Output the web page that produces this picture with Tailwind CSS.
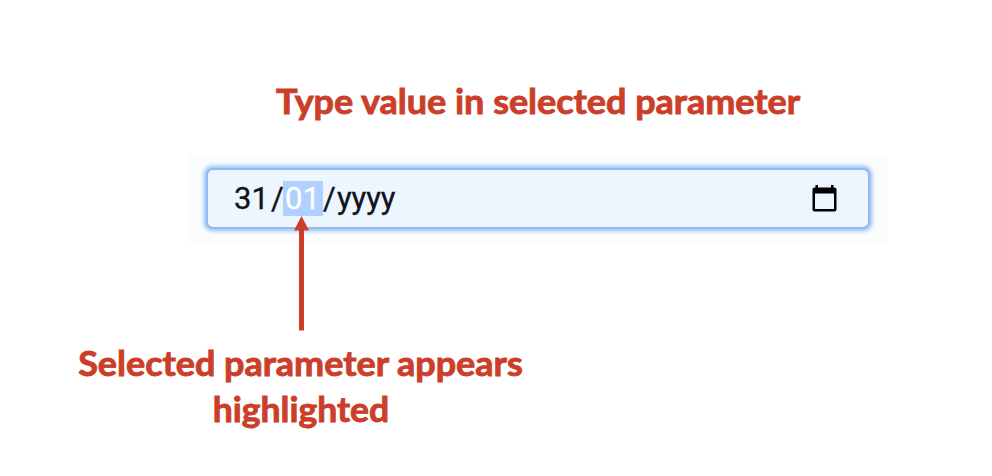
<!DOCTYPE html>
<html lang="en">
<head>
<meta charset="utf-8">
<title>Date field</title>
<script src="https://cdn.jsdelivr.net/npm/@tailwindcss/browser@4"></script>
</head>
<body class="relative h-[476px] w-[992px] overflow-hidden bg-white font-['Lato',sans-serif] text-[#cb3f2a]">
<main class="flex flex-col items-start">
  <h1 class="mt-[77px] ml-[276px] flex h-[46px] w-[525px] items-center justify-center text-[35px] leading-[46px] font-bold whitespace-nowrap [-webkit-text-stroke:0.9px_#cb3f2a]"><span class="scale-x-[1.027]">Type value in selected parameter</span></h1>
  <section class="mt-[31px] ml-[189px] h-[90px] w-[699px] bg-[#fbfdfd] px-[17px] pt-[14px]">
    <div class="flex h-[61px] w-[664px] items-center rounded-[7px] border-[2px] border-[#91bbf0] bg-[#edf5ff] pr-[31px] pl-[26px] font-['Roboto',sans-serif] text-[31px] leading-[35px] text-[#101418] shadow-[0_0_4px_1.5px_#91bcf3] [-webkit-text-stroke:0.3px]">
      <span class="w-[37px] tracking-[0.2px]">31</span>
      <span class="w-[12px]">/</span>
      <span class="h-[35px] w-[40px] bg-[#b0d0ff] pl-[2px] tracking-[0.4px] text-white">01</span>
      <span class="w-[14px]">/</span>
      <span class="tracking-[-0.1px]">yyyy</span>
      <svg class="ml-auto h-[27px] w-[25px]" viewBox="0 0 25 27" aria-hidden="true"><path fill="#000" fill-rule="evenodd" d="M3.500 0h2.500v2.500h13V0h2.500v2.500H22.500a2 2 0 0 1 2 2V24.500a2 2 0 0 1-2 2H2.500a2 2 0 0 1-2-2V4.500a2 2 0 0 1 2-2h1zM3 8.500v15.500h19v-15.500z"/></svg>
    </div>
  </section>
  <p class="mt-[95px] ml-[77px] flex h-[92px] w-[447px] flex-col items-center text-[35px] leading-[46px] font-bold whitespace-nowrap [-webkit-text-stroke:0.9px_#cb3f2a]"><span class="scale-x-[1.027]">Selected parameter appears</span><span class="scale-x-[1.015]">highlighted</span></p>
</main>
<svg class="absolute top-[216px] left-[294px] h-[115px] w-[15px]" viewBox="0 0 15 115" aria-hidden="true"><path fill="#cb3f2a" d="M7.500 0L15 14.500H10V114.500H5V14.500H0z"/></svg>
</body>
</html>
